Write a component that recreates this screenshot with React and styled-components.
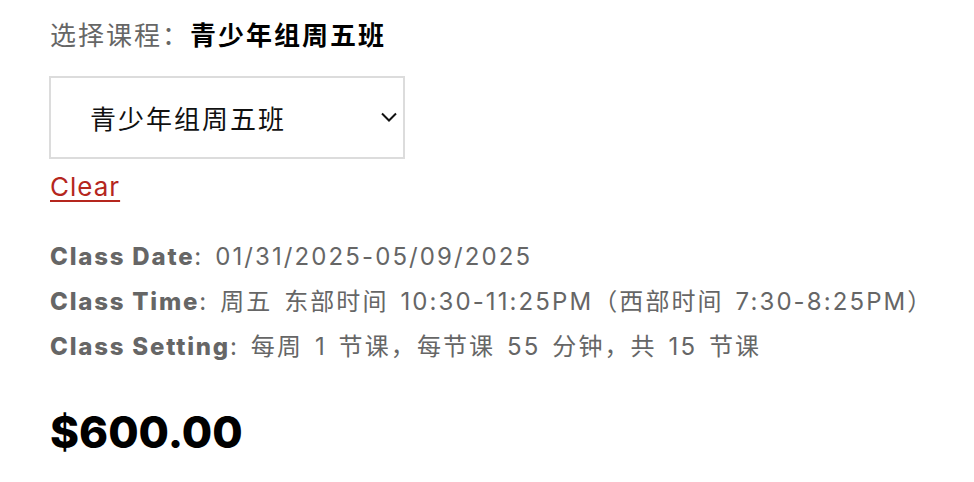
import styled, { createGlobalStyle } from "styled-components";

const GlobalStyle = createGlobalStyle`
  body {
    margin: 0;
    background: #ffffff;
    font-family: "Inter", "Noto Sans CJK SC", sans-serif;
  }
`

const Page = styled.div`
  display: flex;
  flex-direction: column;
  align-items: flex-start;
  padding: 20px 0 0 50px;
`

const TitleRow = styled.div`
  display: flex;
  font-size: 26px;
  line-height: 32px;
  color: #666666;
  letter-spacing: 2px;
`

const TitleValue = styled.span`
  color: #000000;
  font-weight: bold;
`

const SelectWrap = styled.div`
  position: relative;
  margin-top: 24px;
  margin-left: -1px;
  width: 356px;
  height: 83px;
`

const Select = styled.select`
  appearance: none;
  width: 100%;
  height: 100%;
  border: 2px solid #dcdcdc;
  border-radius: 0;
  background: #ffffff;
  padding: 0 0 0 39px;
  font-family: "Noto Sans CJK SC", sans-serif;
  font-size: 26px;
  letter-spacing: 2px;
  color: #111111;
  outline: none;
`

const Chevron = styled.svg`
  position: absolute;
  right: 7px;
  top: 35px;
  pointer-events: none;
`

const ClearLink = styled.a`
  margin-top: 12px;
  font-size: 26px;
  line-height: 32px;
  letter-spacing: 1px;
  color: #b5261e;
  text-decoration: underline;
  text-decoration-thickness: 2px;
  text-underline-offset: 4px;
  cursor: pointer;
`

const Details = styled.div`
  margin-top: 31px;
  font-size: 24px;
  line-height: 45px;
  letter-spacing: 2.1px;
  word-spacing: 3px;
  color: #666666;
`

const Line = styled.div`
  white-space: nowrap;
`

const Label = styled.span`
  font-weight: 800;
  letter-spacing: 1.8px;
  word-spacing: 0;
`

const Price = styled.div`
  margin-top: 35px;
  font-size: 44px;
  line-height: 56px;
  font-weight: 800;
  color: #000000;
`

const details = [
  { label: "Class Date", value: "01/31/2025-05/09/2025" },
  { label: "Class Time", value: "周五 东部时间 10:30-11:25PM（西部时间 7:30-8:25PM）" },
  { label: "Class Setting", value: "每周 1 节课，每节课 55 分钟，共 15 节课" },
]

const App = () => {
  return (
    <Page>
      <GlobalStyle />
      <TitleRow>
        选择课程：<TitleValue>青少年组周五班</TitleValue>
      </TitleRow>
      <SelectWrap>
        <Select defaultValue="fri">
          <option value="fri">青少年组周五班</option>
        </Select>
        <Chevron width="18" height="12" viewBox="0 0 18 12">
          <path d="M2 2.5 L9 9.5 L16 2.5" fill="none" stroke="#111" strokeWidth="2" />
        </Chevron>
      </SelectWrap>
      <ClearLink>Clear</ClearLink>
      <Details>
        {details.map((d) => (
          <Line key={d.label}>
            <Label>{d.label}</Label>: {d.value}
          </Line>
        ))}
      </Details>
      <Price>$600.00</Price>
    </Page>
  )
}

export default App
